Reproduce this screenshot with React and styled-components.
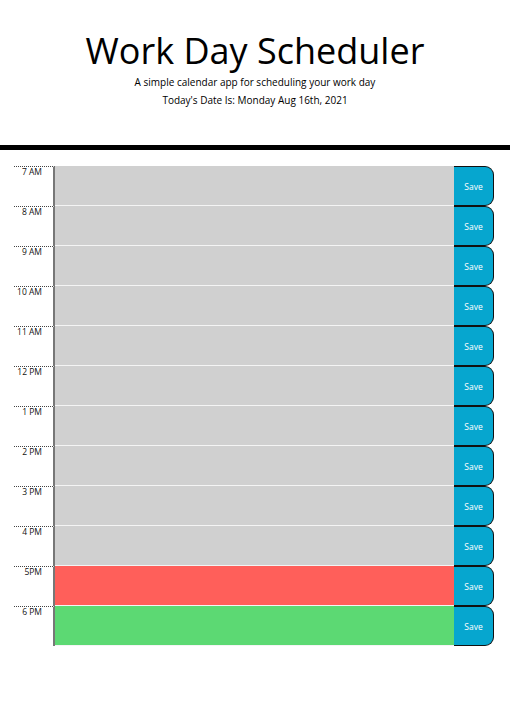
import React from 'react'
import styled, { createGlobalStyle } from 'styled-components'

const GlobalStyle = createGlobalStyle`
  body {
    margin: 0;
    background: #ffffff;
    font-family: "Open Sans", "Liberation Sans", sans-serif;
    color: #000;
  }
`

const hours = [
  { label: '7 AM', tense: 'past' },
  { label: '8 AM', tense: 'past' },
  { label: '9 AM', tense: 'past' },
  { label: '10 AM', tense: 'past' },
  { label: '11 AM', tense: 'past' },
  { label: '12 PM', tense: 'past' },
  { label: '1 PM', tense: 'past' },
  { label: '2 PM', tense: 'past' },
  { label: '3 PM', tense: 'past' },
  { label: '4 PM', tense: 'past' },
  { label: '5PM', tense: 'present' },
  { label: '6 PM', tense: 'future' },
]

const tenseColors = {
  past: '#d0d0d0',
  present: '#ff5f5a',
  future: '#5cd973',
}

const App = () => {
  return (
    <>
      <GlobalStyle />
      <Jumbotron>
        <Title>Work Day Scheduler</Title>
        <Lead>A simple calendar app for scheduling your work day</Lead>
        <Lead>Today's Date Is: Monday Aug 16th, 2021</Lead>
      </Jumbotron>
      <Container>
        {hours.map((h) => (
          <Row key={h.label}>
            <Hour>{h.label}</Hour>
            <Description tense={h.tense} />
            <SaveBtn>Save</SaveBtn>
          </Row>
        ))}
      </Container>
    </>
  )
}

export default App

const Jumbotron = styled.header`
  padding: 30px 0 0;
  height: 115px;
  text-align: center;
  border-bottom: 5px solid #000;
`
const Title = styled.h1`
  margin: 0 0 3px;
  font-size: 36px;
  font-weight: 400;
  line-height: 42px;
`
const Lead = styled.p`
  margin: 0 0 4px;
  font-size: 10px;
  line-height: 14px;
`
const Container = styled.main`
  padding: 16px 16px 0 14px;
`
const Row = styled.div`
  display: flex;
  height: 40px;
`
const Hour = styled.div`
  width: 41px;
  box-sizing: border-box;
  border-top: 1px dotted #444;
  border-right: 2px solid #777;
  padding: 0 11px 0 0;
  text-align: right;
  font-size: 8.5px;
  line-height: 10px;
  color: #111;
`
const Description = styled.div`
  flex: 1;
  box-sizing: border-box;
  background: ${(p) => tenseColors[p.tense]};
  border-bottom: 1px solid #f4f4f4;
`
const SaveBtn = styled.button`
  width: 40px;
  box-sizing: border-box;
  margin: 0;
  padding: 1px 0 0;
  background: #06a6cf;
  border: 1px solid #111;
  border-left: none;
  border-radius: 0 9px 9px 0;
  color: #fff;
  font-family: "Open Sans", "Liberation Sans", sans-serif;
  font-size: 8.5px;
`
